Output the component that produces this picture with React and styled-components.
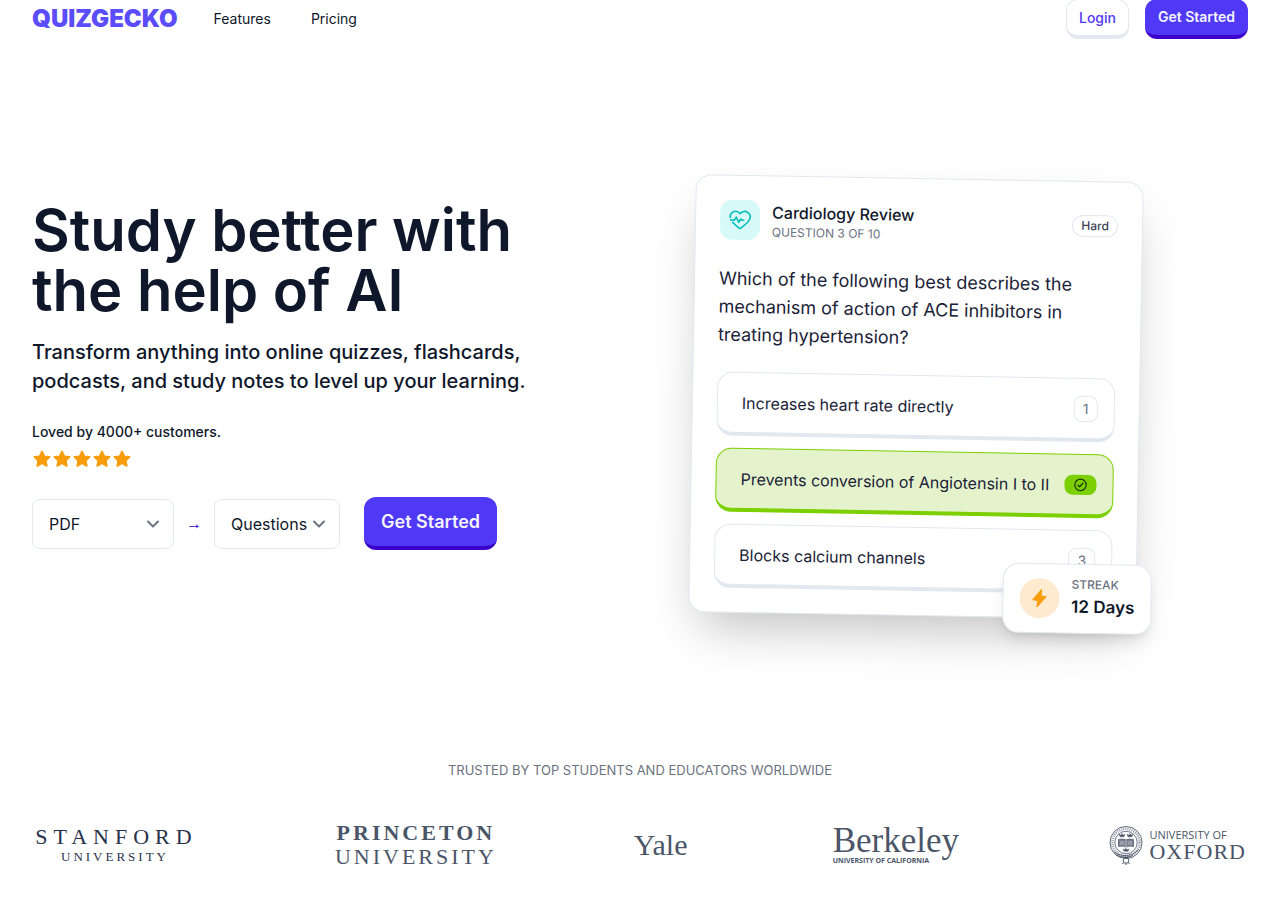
import React from "react";
import styled, { createGlobalStyle } from "styled-components";

const ink = "#0f172a";
const line = "#e2e8f0";
const brand = "#4f39f6";
const brandDark = "#3b00c9";
const muted = "#6b7280";

const GlobalStyle = createGlobalStyle`
  *, *::before, *::after { box-sizing: border-box; }
  body {
    margin: 0;
    background: #fff;
    color: ${ink};
    font-family: Inter, "Liberation Sans", sans-serif;
    overflow-x: hidden;
  }
  h1, h2, p { margin: 0; }
  button, select { font-family: inherit; }
`;

const Page = styled.div`
  padding: 0 27px 32px 32px;
`;

const Header = styled.header`
  display: flex;
  align-items: center;
  justify-content: space-between;
  height: 38px;
`;

const HeaderSide = styled.div`
  display: flex;
  align-items: center;
  gap: ${(p) => p.$gap}px;
`;

const Brand = styled.a`
  color: #5b4dfb;
  font-size: 24px;
  font-weight: 900;
  line-height: 24px;
  text-decoration: none;
`;

const Nav = styled.nav`
  display: flex;
  gap: 40px;
`;

const NavLink = styled.a`
  color: ${ink};
  font-size: 14px;
  line-height: 20px;
  text-decoration: none;
`;

const Button = styled.button`
  display: inline-flex;
  align-items: center;
  justify-content: center;
  height: ${(p) => (p.$large ? 53 : 40)}px;
  padding: ${(p) => (p.$large ? "0 17px" : p.$outline ? "0 12px 1px" : "0 13px 2px")};
  border: ${(p) => (p.$outline ? `1px solid ${line}` : "0")};
  border-bottom: 4px solid ${(p) => (p.$outline ? line : brandDark)};
  border-radius: 12px;
  background: ${(p) => (p.$outline ? "#fff" : brand)};
  color: ${(p) => (p.$outline ? brand : "#f5f3ff")};
  font-size: ${(p) => (p.$large ? 18 : 14)}px;
  font-weight: ${(p) => (p.$outline ? 500 : 600)};
  white-space: nowrap;
  cursor: pointer;
`;

const Hero = styled.main`
  display: grid;
  grid-template-columns: 5fr 6fr;
  padding-top: 140px;
`;

const Intro = styled.section`
  padding-top: 22px;
`;

const Headline = styled.h1`
  font-size: 58px;
  font-weight: 600;
  line-height: 60px;
  white-space: nowrap;
`;

const Lead = styled.p`
  margin-top: 18px;
  font-size: 20px;
  font-weight: 500;
  line-height: 29px;
  white-space: nowrap;
`;

const Loved = styled.p`
  margin-top: 26px;
  font-size: 14px;
  font-weight: 500;
  line-height: 20px;
`;

const Stars = styled.div`
  display: flex;
  margin-top: 7px;
  color: #f99d0b;
`;

const Controls = styled.form`
  display: flex;
  align-items: center;
  margin-top: 28px;
`;

const SelectBox = styled.span`
  display: inline-grid;
  grid-template-columns: 1fr 32px;
  align-items: center;
  width: ${(p) => p.$width}px;
  height: 50px;
  border: 1px solid ${line};
  border-radius: 8px;

  & > select {
    grid-area: 1 / 1 / 2 / 3;
    width: 100%;
    height: 100%;
    padding: 0 0 0 16px;
    border: 0;
    background: transparent;
    color: ${ink};
    font-size: 16px;
    appearance: none;
  }

  & > svg {
    grid-area: 1 / 2;
    pointer-events: none;
  }
`;

const Arrow = styled.span`
  width: 40px;
  color: ${brandDark};
  font-family: "Liberation Sans", sans-serif;
  font-size: 16px;
  text-align: center;
`;

const Submit = styled.div`
  margin-left: 24px;
`;

const Showcase = styled.section`
  display: flex;
  justify-content: center;
  align-items: flex-start;
`;

const Card = styled.article`
  position: relative;
  width: 448px;
  padding: 24px;
  border: 1px solid ${line};
  border-radius: 16px;
  background: #fff;
  box-shadow: 0 25px 50px -12px rgba(0, 0, 0, 0.25);
  transform: rotate(1deg);
`;

const CardHead = styled.header`
  display: flex;
  align-items: center;
  gap: 12px;
`;

const IconTile = styled.span`
  display: grid;
  place-items: center;
  width: 40px;
  height: 40px;
  border-radius: ${(p) => (p.$round ? 20 : 12)}px;
  background: ${(p) => (p.$round ? "#feebcf" : "#d7faf8")};
  color: ${(p) => (p.$round ? "#f99d0b" : "#06bdbb")};
`;

const CardTitle = styled.h2`
  font-size: 16px;
  font-weight: 500;
  line-height: 24px;
`;

const Caption = styled.p`
  color: ${muted};
  font-size: 12px;
  font-weight: ${(p) => (p.$medium ? 500 : 400)};
  line-height: 16px;
`;

const Pill = styled.span`
  margin-left: auto;
  padding: 2px 8px;
  border: 1px solid ${line};
  border-radius: 12px;
  color: #3b4256;
  font-size: 12px;
  font-weight: 500;
  line-height: 16px;
`;

const Question = styled.p`
  margin: 25px 0 23px;
  font-size: 18px;
  line-height: 28px;
  color: #1b2237;
  white-space: nowrap;
`;

const Options = styled.div`
  display: grid;
  gap: 12px;
`;

const Option = styled.button`
  display: flex;
  align-items: center;
  justify-content: space-between;
  height: 64px;
  padding: 0 16px 0 24px;
  border: 1px solid ${(p) => (p.$correct ? "#7ccf00" : line)};
  border-bottom-width: 4px;
  border-radius: 16px;
  background: ${(p) => (p.$correct ? "#e5f3cd" : "#fff")};
  color: #1b2237;
  font-size: 16px;
  text-align: left;
  white-space: nowrap;
`;

const KeyHint = styled.kbd`
  display: grid;
  place-items: center;
  min-width: 24px;
  height: 26px;
  padding: 0 8px;
  border: 1px solid ${line};
  border-radius: 8px;
  color: ${muted};
  font-family: inherit;
  font-size: 14px;
`;

const CorrectBadge = styled.span`
  display: grid;
  place-items: center;
  width: 32px;
  height: 20px;
  border-radius: 8px;
  background: #7ccf00;
  color: #1d3a05;
`;

const Streak = styled.aside`
  position: absolute;
  right: -16px;
  bottom: -16px;
  display: flex;
  align-items: center;
  gap: 12px;
  padding: 12px 16px;
  border: 1px solid ${line};
  border-radius: 16px;
  background: #fff;
  box-shadow: 0 10px 15px -3px rgba(0, 0, 0, 0.1), 0 4px 6px -4px rgba(0, 0, 0, 0.1);
`;

const StreakValue = styled.p`
  font-size: 17px;
  font-weight: 600;
  line-height: 28px;
  white-space: nowrap;
`;

const Trusted = styled.section`
  padding-top: 144px;
`;

const TrustedTitle = styled.p`
  color: ${muted};
  font-size: 13px;
  line-height: 20px;
  text-align: center;
`;

const Logos = styled.div`
  display: flex;
  align-items: center;
  justify-content: space-between;
  height: 44px;
  margin-top: 43px;
  color: #4a5568;
`;

const Mark = styled.div`
  display: flex;
  flex-direction: column;
  align-items: ${(p) => p.$align || "center"};
  min-width: ${(p) => p.$width || 0}px;
  color: ${(p) => p.$tone || "inherit"};
`;

const SerifWord = styled.span`
  font-family: "Liberation Serif", serif;
  font-size: ${(p) => p.$size}px;
  line-height: ${(p) => p.$line}px;
  font-weight: ${(p) => (p.$bold ? 700 : 400)};
  letter-spacing: ${(p) => p.$track || 0}px;
  margin-right: -${(p) => p.$track || 0}px;
`;

const SansWord = styled.span`
  font-family: "Open Sans", sans-serif;
  font-size: ${(p) => p.$size}px;
  line-height: ${(p) => p.$line}px;
  font-weight: ${(p) => (p.$bold ? 700 : 400)};
`;

const Oxford = styled.div`
  display: flex;
  align-items: center;
  justify-content: flex-end;
  gap: 6px;
  min-width: 149px;
  padding-right: 3px;
`;

const Star = () => (
  <svg width="20" height="20" viewBox="0 0 20 20" fill="currentColor" stroke="currentColor" strokeWidth="1.6" strokeLinejoin="round" aria-hidden="true">
    <path d="M10 2.3l2.3 4.9 5.4.7-3.9 3.700 1 5.400-4.800-2.600L5.200 17l1-5.400-3.900-3.700 5.400-.7z" />
  </svg>
);

const Chevron = () => (
  <svg width="24" height="24" viewBox="0 0 24 24" fill="none" stroke="#6b7280" strokeWidth="2" strokeLinecap="round" strokeLinejoin="round" aria-hidden="true">
    <path d="M7 9.500l5 5 5-5" />
  </svg>
);

const HeartPulse = () => (
  <svg width="24" height="24" viewBox="0 0 24 24" fill="none" stroke="currentColor" strokeWidth="1.6" strokeLinecap="round" strokeLinejoin="round" aria-hidden="true">
    <path d="M2.200 9.600C1.600 4.200 8.200 1.200 12 5.800c4.400-5.200 12.200-.5 9.600 5.400-1.500 3.500-5.300 6.300-8.300 8.700-.9.7-1.700.7-2.600 0-2-1.600-4.200-3.300-6-5.400" />
    <path d="M2.500 12.300h3.800l1.800-3 2.600 5.200 2-3.400 1 1.200h2" />
  </svg>
);

const CircleCheck = () => (
  <svg width="14" height="14" viewBox="0 0 24 24" fill="none" stroke="currentColor" strokeWidth="2.2" strokeLinecap="round" strokeLinejoin="round" aria-hidden="true">
    <circle cx="12" cy="12" r="9.8" />
    <path d="M7.800 12.600l2.800 2.600 5.600-6" />
  </svg>
);

const Bolt = () => (
  <svg width="20" height="20" viewBox="0 0 20 20" fill="currentColor" stroke="currentColor" strokeWidth="1" strokeLinejoin="round" aria-hidden="true">
    <path d="M12 1.300L3.400 11.600l5 .7-.9 6.400L16.600 8.400l-4.900-.7z" />
  </svg>
);

const Crest = () => (
  <svg width="34" height="41" viewBox="0 0 34 41" fill="none" stroke="currentColor" aria-hidden="true">
    <circle cx="17" cy="17.5" r="16" strokeWidth="0.9" />
    <circle cx="17" cy="17.5" r="13.6" strokeWidth="2.6" strokeDasharray="1 1.1" opacity="0.6" />
    <circle cx="17" cy="17.5" r="11.2" strokeWidth="0.8" />
    <path d="M9.500 14.500q4-1.200 7.500.4 3.500-1.600 7.500-.4v7q-4-1-7.500.5-3.500-1.500-7.500-.5z" fill="currentColor" fillOpacity="0.75" strokeWidth="0.7" />
    <path d="M17 15v7M11 17h4M11 19h4M19 17h4M19 19h4" stroke="#fff" strokeWidth="0.5" />
    <path d="M11 11.800l-1-2.600 1.800 1 1.200-1.800 1.200 1.800 1.800-1-1 2.600zM19 11.800l-1-2.600 1.800 1L21 8.400l1.200 1.800 1.800-1-1 2.600zM15 26.300l-1-2.400 1.800.9 1.200-1.600 1.200 1.600 1.800-.9-1 2.400z" fill="currentColor" strokeWidth="0.4" />
    <path d="M5 27q8 5.500 17.500 2.500q4-1.400 7-5M7 30q9 4 17 .5" strokeWidth="0.9" />
    <circle cx="17" cy="35.500" r="2.800" strokeWidth="1" />
    <path d="M14.500 37.500l-1 1.500M19.500 37.500l1 1.500M17 38.300v1.700M14.500 32.500h5" strokeWidth="1" />
  </svg>
);

const options = [
  { text: "Increases heart rate directly", hint: "1" },
  { text: "Prevents conversion of Angiotensin I to II", correct: true },
  { text: "Blocks calcium channels", hint: "3" },
];

function QuizCard() {
  return (
    <Card>
      <CardHead>
        <IconTile><HeartPulse /></IconTile>
        <div>
          <CardTitle>Cardiology Review</CardTitle>
          <Caption>QUESTION 3 OF 10</Caption>
        </div>
        <Pill>Hard</Pill>
      </CardHead>
      <Question>
        Which of the following best describes the<br />
        mechanism of action of ACE inhibitors in<br />
        treating hypertension?
      </Question>
      <Options>
        {options.map((o) => (
          <Option key={o.text} type="button" $correct={o.correct}>
            {o.text}
            {o.correct ? <CorrectBadge><CircleCheck /></CorrectBadge> : <KeyHint>{o.hint}</KeyHint>}
          </Option>
        ))}
      </Options>
      <Streak>
        <IconTile $round><Bolt /></IconTile>
        <div>
          <Caption $medium>STREAK</Caption>
          <StreakValue>12 Days</StreakValue>
        </div>
      </Streak>
    </Card>
  );
}

export default function App() {
  return (
    <>
      <GlobalStyle />
      <Page>
        <Header>
          <HeaderSide $gap={36}>
            <Brand href="#">QUIZGECKO</Brand>
            <Nav>
              <NavLink href="#features">Features</NavLink>
              <NavLink href="#pricing">Pricing</NavLink>
            </Nav>
          </HeaderSide>
          <HeaderSide $gap={16}>
            <Button type="button" $outline>Login</Button>
            <Button type="button">Get Started</Button>
          </HeaderSide>
        </Header>

        <Hero>
          <Intro>
            <Headline>Study better with<br />the help of AI</Headline>
            <Lead>
              Transform anything into online quizzes, flashcards,<br />
              podcasts, and study notes to level up your learning.
            </Lead>
            <Loved>Loved by 4000+ customers.</Loved>
            <Stars role="img" aria-label="Five stars">
              <Star /><Star /><Star /><Star /><Star />
            </Stars>
            <Controls onSubmit={(e) => e.preventDefault()}>
              <SelectBox $width={142}>
                <select aria-label="Source" defaultValue="PDF">
                  <option>PDF</option>
                </select>
                <Chevron />
              </SelectBox>
              <Arrow>→</Arrow>
              <SelectBox $width={126}>
                <select aria-label="Output" defaultValue="Questions">
                  <option>Questions</option>
                </select>
                <Chevron />
              </SelectBox>
              <Submit><Button type="submit" $large>Get Started</Button></Submit>
            </Controls>
          </Intro>
          <Showcase>
            <QuizCard />
          </Showcase>
        </Hero>

        <Trusted>
          <TrustedTitle>TRUSTED BY TOP STUDENTS AND EDUCATORS WORLDWIDE</TrustedTitle>
          <Logos>
            <Mark $tone="#27324a" $width={163}>
              <SerifWord $size={22} $line={24} $track={6}>STANFORD</SerifWord>
              <SerifWord $size={13} $line={16} $track={3}>UNIVERSITY</SerifWord>
            </Mark>
            <Mark>
              <SerifWord $size={22} $line={24} $track={3} $bold>PRINCETON</SerifWord>
              <SerifWord $size={22} $line={24} $track={3}>UNIVERSITY</SerifWord>
            </Mark>
            <Mark $align="flex-start" $width={59}>
              <SerifWord $size={30} $line={32}>Yale</SerifWord>
            </Mark>
            <Mark $align="flex-start" $width={125}>
              <SerifWord $size={35} $line={32}>Berkeley</SerifWord>
              <SansWord $size={7} $line={8} $bold>UNIVERSITY OF CALIFORNIA</SansWord>
            </Mark>
            <Oxford>
              <Crest />
              <Mark $align="flex-start">
                <SansWord $size={11} $line={14}>UNIVERSITY OF</SansWord>
                <SerifWord $size={22} $line={20} $track={1}>OXFORD</SerifWord>
              </Mark>
            </Oxford>
          </Logos>
        </Trusted>
      </Page>
    </>
  );
}
